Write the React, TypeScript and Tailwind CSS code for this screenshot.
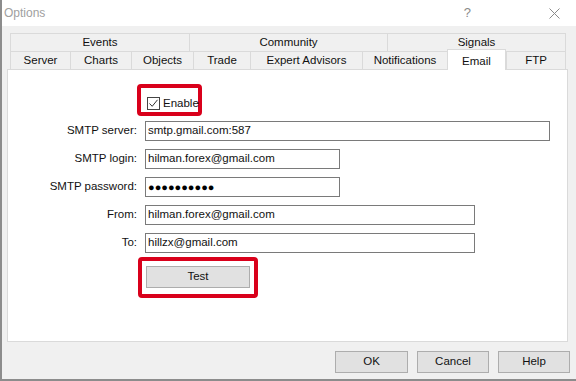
const topTabs = [
  { label: "Events", w: "w-[179px]" },
  { label: "Community", w: "w-[198px]" },
  { label: "Signals", w: "w-[179px]" },
];

const tabs = [
  { label: "Server", w: "w-[60px]" },
  { label: "Charts", w: "w-[61px]" },
  { label: "Objects", w: "w-[62px]" },
  { label: "Trade", w: "w-[57px]" },
  { label: "Expert Advisors", w: "w-[112px]" },
  { label: "Notifications", w: "w-[85px]" },
  { label: "Email", w: "w-[59px]", active: true },
  { label: "FTP", w: "w-[60px]" },
];

const fields = [
  { label: "SMTP server:", value: "smtp.gmail.com:587", w: "w-[405px]" },
  { label: "SMTP login:", value: "hilman.forex@gmail.com", w: "w-[195px]" },
  { label: "SMTP password:", value: "●●●●●●●●●●", w: "w-[195px]", secret: true },
  { label: "From:", value: "hilman.forex@gmail.com", w: "w-[330px]" },
  { label: "To:", value: "hillzx@gmail.com", w: "w-[330px]" },
];

function WinButton({ label, className = "" }: { label: string; className?: string }) {
  return (
    <button
      className={`h-[22px] border border-[#adadad] bg-[#e1e1e1] text-[11.5px] text-[#111] ${className}`}
    >
      {label}
    </button>
  );
}

export default function App() {
  return (
    <div className="relative w-[576px] h-[381px] overflow-hidden bg-[#f0f0f0] border-l-2 border-b-2 border-[#8c8c8c] font-['Liberation_Sans',Arial,sans-serif] text-[11.5px] text-[#111] flex flex-col">
      {/* Title bar */}
      <div className="h-[26px] shrink-0 bg-white flex items-center pl-[2px] pr-[16px]">
        <span className="text-[12px] text-[#a0a0a0]">Options</span>
        <span className="ml-auto mr-[78px] text-[13px] text-[#8a8a8a]">?</span>
        <svg width="11" height="11" viewBox="0 0 11 11">
          <path d="M0.5 0.5 L10.5 10.5 M10.5 0.5 L0.5 10.5" stroke="#8a8a8a" strokeWidth="1" />
        </svg>
      </div>

      {/* Tabs */}
      <div className="mt-[7px] ml-[8px] flex flex-col">
        <div className="flex h-[18px]">
          {topTabs.map((t, i) => (
            <div
              key={t.label}
              className={`${t.w} flex items-center justify-center border-t border-l border-[#dadada] bg-[#f0f0f0] ${
                i === topTabs.length - 1 ? "border-r" : ""
              }`}
            >
              {t.label}
            </div>
          ))}
        </div>
        <div className="flex h-[18px] items-end">
          {tabs.map((t, i) =>
            t.active ? (
              <div
                key={t.label}
                className={`${t.w} relative z-10 -mb-px h-[21px] flex items-start justify-center pt-[3px] bg-white border-t border-l border-r border-[#dadada]`}
              >
                {t.label}
              </div>
            ) : (
              <div
                key={t.label}
                className={`${t.w} h-[18px] flex items-center justify-center border-t border-l border-[#dadada] bg-[#f0f0f0] ${
                  i === tabs.length - 1 ? "border-r" : ""
                }`}
              >
                {t.label}
              </div>
            )
          )}
        </div>
      </div>

      {/* Panel */}
      <div className="ml-[5px] w-[561px] h-[273px] shrink-0 bg-white border border-[#dadada] flex flex-col pt-[14px]">
        <div className="ml-[129px] w-[65px] h-[32px] border-4 border-[#d9001b] rounded-[4px] flex items-end pl-[6px] pb-[2px] gap-[3px]">
          <div className="w-[13px] h-[13px] border border-[#444] bg-white flex items-center justify-center">
            <svg width="11" height="11" viewBox="0 0 11 11">
              <path d="M1.5 5.5 L4.2 8.3 L9.5 1.8" stroke="#333" strokeWidth="1" fill="none" />
            </svg>
          </div>
          <span className="leading-[13px]">Enable</span>
        </div>

        <div className="mt-[5px] flex flex-col gap-[8px]">
          {fields.map((f) => (
            <div key={f.label} className="flex items-center h-[20px]">
              <div className="w-[131px] text-right pr-[2px]">{f.label}</div>
              <div
                className={`${f.w} ml-[6px] h-[20px] border border-[#7a7a7a] bg-white flex items-center pl-[2px] ${
                  f.secret ? "text-[11px] text-black" : ""
                }`}
              >
                {f.value}
              </div>
            </div>
          ))}
        </div>

        <div className="mt-[4px] ml-[130px] w-[120px] h-[41px] border-4 border-[#d9001b] rounded-[4px] pl-[4px] pt-[5px]">
          <WinButton label="Test" className="w-[104px]" />
        </div>
      </div>

      {/* Footer buttons */}
      <div className="flex-1 flex justify-end items-start pt-[9px] pr-[6px] gap-[9px]">
        <WinButton label="OK" className="w-[73px]" />
        <WinButton label="Cancel" className="w-[72px]" />
        <WinButton label="Help" className="w-[72px]" />
      </div>
    </div>
  );
}
